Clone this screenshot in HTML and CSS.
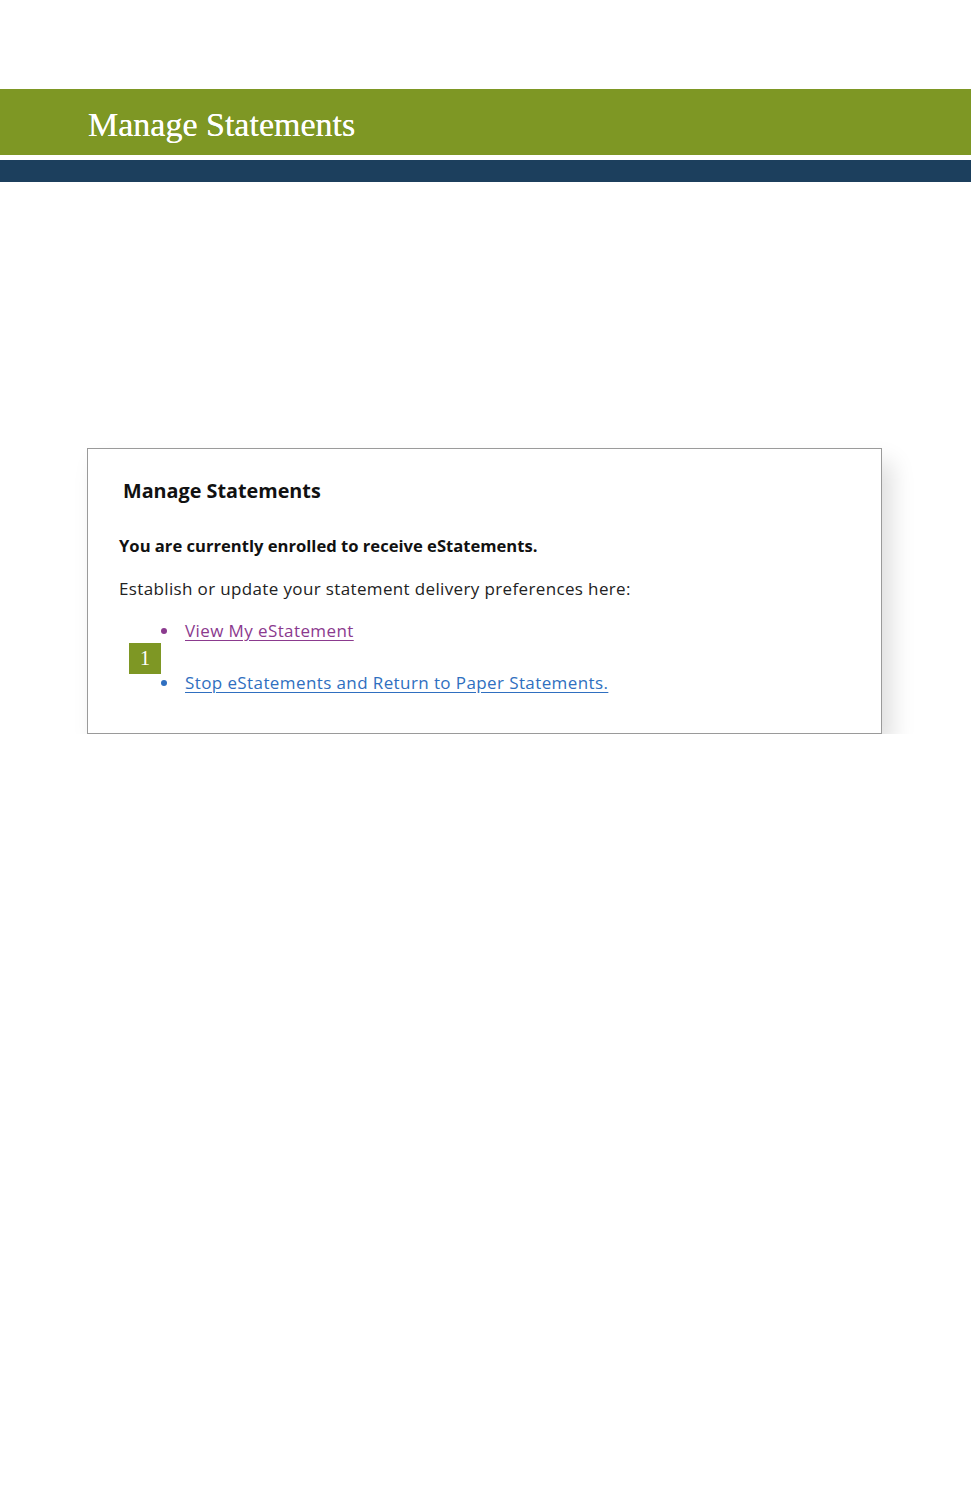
FILE: index.html
```html
<!DOCTYPE html>
<html lang="en">
<head>
<meta charset="utf-8">
<title>Manage Statements</title>
<link rel="stylesheet" href="styles.css">
</head>
<body>
<header class="banner">
  <div class="banner-green"><h1 class="banner-title">Manage Statements</h1></div>
  <div class="banner-navy"></div>
</header>
<main class="content">
  <section class="card">
    <h2 class="card-title">Manage Statements</h2>
    <p class="enrolled">You are currently enrolled to receive eStatements.</p>
    <p class="intro">Establish or update your statement delivery preferences here:</p>
    <ul class="links">
      <li class="link-item visited"><span class="dot"></span><a href="#">View My eStatement</a></li>
      <li class="link-item"><span class="dot"></span><a href="#">Stop eStatements and Return to Paper Statements.</a></li>
      <li class="badge">1</li>
    </ul>
  </section>
</main>
</body>
</html>
```
FILE: styles.css
```css
html, body {
  margin: 0;
  padding: 0;
  background: #ffffff;
}
body {
  font-family: "Open Sans", "Noto Sans", sans-serif;
  color: #111;
}
.banner {
  padding-top: 89px;
}
.banner-green {
  height: 66px;
  background: #7e9724;
  display: flex;
  align-items: center;
  padding-left: 88px;
}
.banner-title {
  margin: 0;
  font-family: "Liberation Serif", "Times New Roman", serif;
  font-weight: normal;
  font-size: 34px;
  line-height: 40px;
  color: #ffffff;
  padding-top: 6px;
  text-shadow: 0 0 0.5px #fff;
}
.banner-navy {
  margin-top: 5px;
  height: 22px;
  background: #1c3f5d;
}
.content {
  padding-top: 266px;
  padding-left: 87px;
}
.card {
  box-sizing: border-box;
  width: 795px;
  height: 286px;
  border: 1px solid #9a9a9a;
  background: #fff;
  box-shadow: 10px 14px 22px rgba(0,0,0,0.13);
  padding: 30px 0 0 31px;
}
.card-title {
  margin: 0 0 0 4px;
  font-size: 19.8px;
  line-height: 24px;
  font-weight: 700;
  color: #111;
}
.enrolled {
  margin: 33px 0 0 0;
  font-size: 16.6px;
  line-height: 20px;
  font-weight: 700;
}
.intro {
  margin: 23px 0 0 0;
  font-size: 17px;
  line-height: 20px;
  color: #222;
  letter-spacing: 0.36px;
}
.links {
  position: relative;
  list-style: none;
  margin: 22px 0 0 0;
  padding: 0 0 0 42px;
}
.link-item {
  display: flex;
  align-items: center;
  height: 20px;
  font-size: 17px;
  line-height: 20px;
  color: #2f6fc0;
}
.link-item + .link-item {
  margin-top: 32px;
}
.link-item a {
  color: #2f6fc0;
  text-decoration: underline;
  text-underline-offset: 3px;
  letter-spacing: 0.4px;
}
.dot {
  width: 6px;
  height: 6px;
  border-radius: 50%;
  background: #2f6fc0;
  margin-right: 18px;
}
.link-item.visited a { color: #8b3a8e; }
.link-item.visited .dot { background: #8b3a8e; }
.badge {
  position: absolute;
  left: 10px;
  top: 22px;
  width: 32px;
  height: 31px;
  background: #7e9724;
  color: #fff;
  font-family: "Liberation Serif", "Times New Roman", serif;
  font-size: 20px;
  line-height: 31px;
  text-align: center;
}
```
